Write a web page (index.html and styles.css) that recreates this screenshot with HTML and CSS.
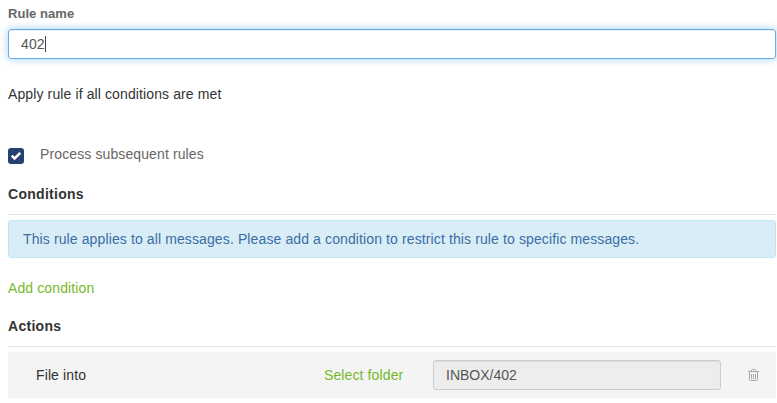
FILE: index.html
```html
<!DOCTYPE html>
<html lang="en">
<head>
<meta charset="utf-8">
<title>Edit rule</title>
<link rel="stylesheet" href="styles.css">
</head>
<body>
<main class="rule">
  <div class="rule-label">Rule name</div>
  <div class="name-input"><span>402</span><i class="caret"></i></div>
  <div class="scope">Apply rule if all conditions are met</div>
  <div class="process">
    <span class="checkbox"><svg width="16" height="16" viewBox="0 0 16 16"><path d="M3.7 7.6 6.6 10.4 12.3 4.9" fill="none" stroke="#fff" stroke-width="2.6"/></svg></span>
    <span>Process subsequent rules</span>
  </div>
  <h2>Conditions</h2>
  <div class="alert">This rule applies to all messages. Please add a condition to restrict this rule to specific messages.</div>
  <div class="add">Add condition</div>
  <h2>Actions</h2>
  <div class="action">
    <span class="action-name">File into</span>
    <span class="select">Select folder</span>
    <div class="folder">INBOX/402</div>
    <svg class="trash" width="11" height="12" viewBox="0 0 11 12"><path d="M0 2.5H11M3.5 2.5V1.2Q3.5.5 4.2.5H6.8Q7.5.5 7.5 1.2V2.5M1.5 2.5V10.8Q1.5 11.5 2.2 11.5H8.8Q9.5 11.5 9.5 10.8V2.5M3.5 5V10M5.5 5V10M7.5 5V10" fill="none" stroke="#aaa"/></svg>
  </div>
</main>
</body>
</html>
```
FILE: styles.css
```css
* { box-sizing: border-box; }
body { margin: 0; background: #fff; overflow: hidden; }
.rule { width: 768px; margin-left: 8px; padding-top: 4px; font: 14px/20px "Liberation Sans", Arial, sans-serif; letter-spacing: .115px; color: #333; }
.rule-label { font-size: 13px; font-weight: bold; letter-spacing: .05px; color: #666; height: 25px; }
.name-input { display: flex; align-items: center; height: 30px; padding: 0 12px; border: 1px solid #66afe9; border-radius: 3px; color: #555; box-shadow: 0 0 8px rgba(102,175,233,.6), inset 0 1px 1px rgba(0,0,0,.075); }
.caret { width: 1px; height: 16px; background: #444; }
.scope { margin-top: 25px; }
.process { display: flex; gap: 16px; margin-top: 40px; color: #666; }
.checkbox { width: 16px; height: 16px; margin-top: 4px; border-radius: 3px; background: #283f73; }
.checkbox svg { display: block; }
h2 { margin: 20px 0 5px; height: 31px; border-bottom: 1px solid #e5e5e5; font-size: 14px; line-height: 20px; letter-spacing: .28px; }
.alert { height: 38px; padding: 8px 14px; border: 1px solid #bce8f1; border-radius: 3px; background: #d9edf7; color: #3a6ea5; }
.add { margin-top: 20px; color: #76b82a; }
.add + h2 { margin-top: 18px; }
.action { display: flex; align-items: center; height: 46px; padding-left: 28px; background: #f4f4f4; }
.action-name { width: 288px; }
.select { width: 109px; color: #76b82a; }
.folder { width: 288px; height: 30px; padding: 4px 12px; border: 1px solid #ccc; border-radius: 3px; background: #ededed; color: #555; letter-spacing: 0; box-shadow: inset 0 1px 1px rgba(0,0,0,.075); }
.trash { margin-left: 27px; }
```
